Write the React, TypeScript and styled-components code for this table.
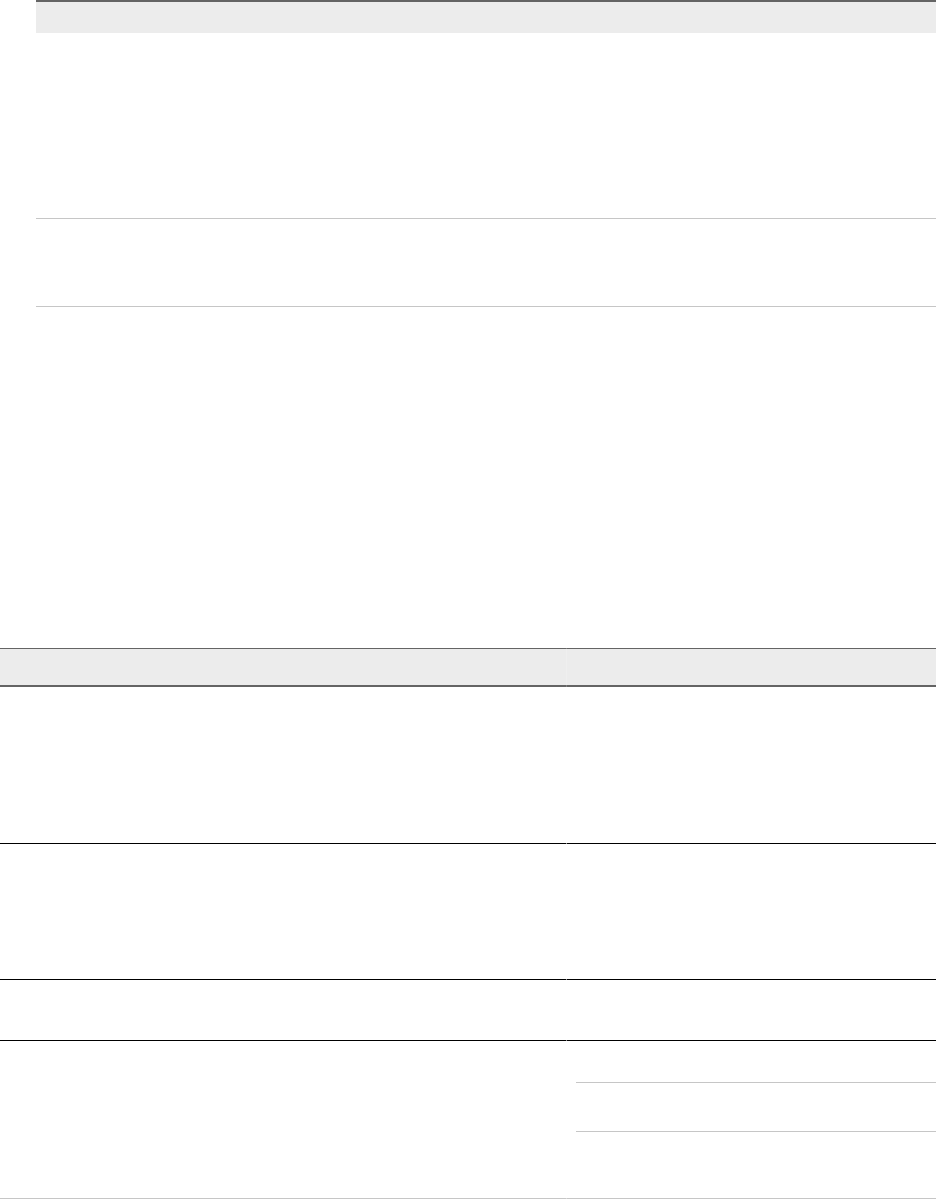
import { Fragment } from "react";
import styled, { createGlobalStyle } from "styled-components";

type Row = { height: number; last?: boolean; nested?: number[] };

const rows: Row[] = [
  { height: 156 },
  { height: 135 },
  { height: 60 },
  { height: 157, last: true, nested: [41, 48] },
];

function App() {
  return (
    <>
      <GlobalStyle />
      <Page>
        <TopTable>
          <TopHead />
          <TopRow $height={185} />
          <TopRow $height={87} />
        </TopTable>

        <Spacer />

        <GridTable>
          <HeadCell />
          <Divider $head />
          <HeadCell />

          {rows.map((row, i) => (
            <Fragment key={i}>
              <BodyCell $height={row.height} $last={row.last} />
              <Divider $height={row.height} $last={row.last} />
              <BodyCell $height={row.height} $last={row.last}>
                {row.nested && (
                  <SubList>
                    {row.nested.map((h, j) => (
                      <SubRow key={j} $height={h} />
                    ))}
                  </SubList>
                )}
              </BodyCell>
            </Fragment>
          ))}
        </GridTable>
      </Page>
    </>
  );
}

export default App;

/*Styled Components*/

const GlobalStyle = createGlobalStyle`
  body {
    margin: 0;
    background: #ffffff;
    font-family: "Liberation Sans", Arial, sans-serif;
    overflow: hidden;
  }
`;

const Page = styled.div`
  width: 936px;
  display: flex;
  flex-direction: column;
`;

const TopTable = styled.div`
  margin-left: 36px;
  display: flex;
  flex-direction: column;
  border-top: 2px solid #646464;
`;

const TopHead = styled.div`
  height: 31px;
  background: #ececec;
`;

const TopRow = styled.div<{ $height: number }>`
  height: ${(p) => p.$height}px;
  border-bottom: 1px solid #c6c6c6;
`;

const Spacer = styled.div`
  height: 341px;
`;

const GridTable = styled.div`
  display: grid;
  grid-template-columns: 566px 1px 1fr;
`;

const HeadCell = styled.div`
  height: 36px;
  background: #ececec;
  border-top: 1px solid #646464;
  border-bottom: 2px solid #646464;
`;

const Divider = styled.div<{ $head?: boolean; $height?: number; $last?: boolean }>`
  height: ${(p) => (p.$head ? 36 : p.$height)}px;
  background: ${(p) => (p.$head ? "#efefef" : "#ffffff")};
  border-top: ${(p) => (p.$head ? "1px solid #808080" : "none")};
  border-bottom: ${(p) =>
    p.$head ? "2px solid #808080" : p.$last ? "1px solid #d8d8d8" : "1px solid #8a8a8a"};
`;

const BodyCell = styled.div<{ $height: number; $last?: boolean }>`
  height: ${(p) => p.$height}px;
  border-bottom: 1px solid ${(p) => (p.$last ? "#c6c6c6" : "#000000")};
  display: flex;
  flex-direction: column;
`;

const SubList = styled.div`
  padding-left: 9px;
  display: flex;
  flex-direction: column;
`;

const SubRow = styled.div<{ $height: number }>`
  height: ${(p) => p.$height}px;
  border-bottom: 1px solid #c6c6c6;
`;
